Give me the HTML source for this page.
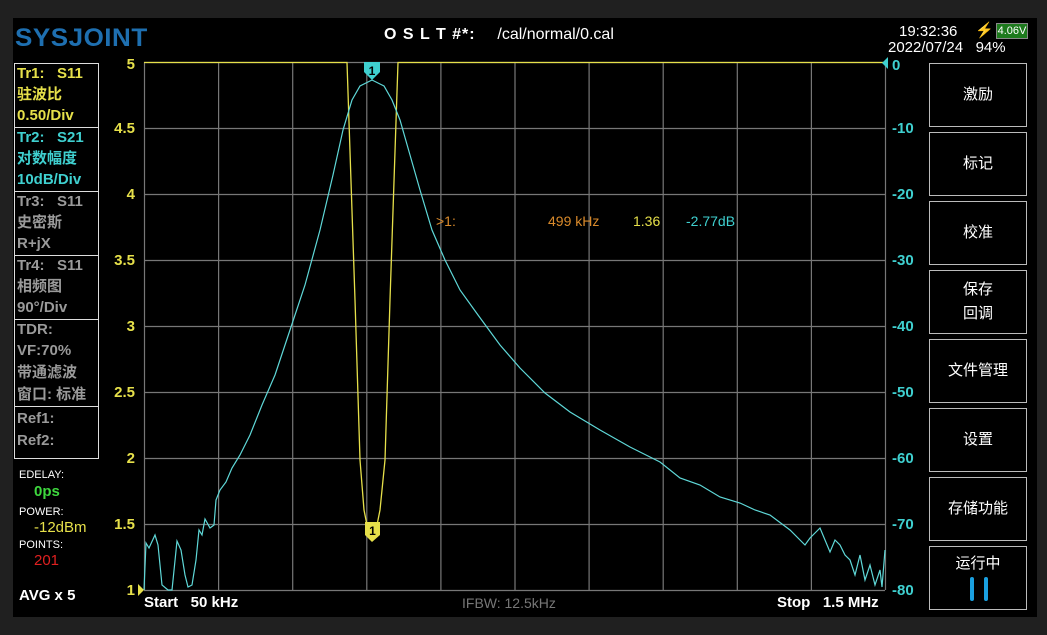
<!DOCTYPE html>
<html><head><meta charset="utf-8"><style>
body{margin:0;width:1047px;height:635px;background:#202020;position:relative;overflow:hidden;font-family:"Liberation Sans","Noto Sans CJK SC",sans-serif;}
#scr{position:absolute;left:13px;top:18px;width:1024px;height:599px;background:#000;}
.a{position:absolute;white-space:nowrap;}
.box{position:absolute;left:14px;width:85px;border:1px solid #ddd;box-sizing:border-box;}
.l{position:absolute;left:17px;font-size:15px;line-height:20px;font-weight:bold;white-space:nowrap;}
.btn{position:absolute;left:929px;width:98px;border:1.5px solid #bbb;box-sizing:border-box;color:#fff;font-size:15px;display:flex;align-items:center;justify-content:center;text-align:center;line-height:24px;}
.y{color:#e6e04a}.c{color:#3fd0d0}.g{color:#9a9a9a}
.yl{position:absolute;right:912px;font-size:15px;color:#e6e04a;font-weight:bold}
.cl{position:absolute;left:892px;font-size:15px;color:#3fd0d0;font-weight:bold}
</style></head><body>
<div id="scr"></div>
<div class="a" style="left:15px;top:24px;font-size:25px;font-weight:bold;color:#1e6fb0;letter-spacing:0.5px;transform:scaleX(1.04);transform-origin:left">SYSJOINT</div>
<div class="a" style="left:384px;top:26px;font-size:16px;color:#fff;font-weight:bold;letter-spacing:1px">O S L T #*: &nbsp;&nbsp; <span style="font-weight:normal;letter-spacing:0">/cal/normal/0.cal</span></div>
<div class="a" style="left:899px;top:23px;font-size:15px;color:#fff">19:32:36</div>
<div class="a" style="left:975px;top:21px;font-size:15px;color:#f0c020">⚡</div>
<div class="a" style="left:996px;top:23px;width:30px;height:14px;background:#1d7a1d;border:1px solid #888;font-size:11px;color:#fff;line-height:14px;text-align:center">4.06V</div>
<div class="a" style="left:888px;top:39px;font-size:15px;color:#fff">2022/07/24 &nbsp;&nbsp;94%</div>

<div class="box" style="top:63px;height:65px"></div>
<div class="box" style="top:127px;height:65px"></div>
<div class="box" style="top:191px;height:65px"></div>
<div class="box" style="top:255px;height:65px"></div>
<div class="box" style="top:319px;height:88px"></div>
<div class="box" style="top:406px;height:53px"></div>
<div class="l y" style="top:64px">Tr1: &nbsp; S11</div>
<div class="l y" style="top:85px">驻波比</div>
<div class="l y" style="top:106px">0.50/Div</div>
<div class="l c" style="top:128px">Tr2: &nbsp; S21</div>
<div class="l c" style="top:149px">对数幅度</div>
<div class="l c" style="top:170px">10dB/Div</div>
<div class="l g" style="top:192px">Tr3: &nbsp; S11</div>
<div class="l g" style="top:213px">史密斯</div>
<div class="l g" style="top:234px">R+jX</div>
<div class="l g" style="top:256px">Tr4: &nbsp; S11</div>
<div class="l g" style="top:277px">相频图</div>
<div class="l g" style="top:298px">90°/Div</div>
<div class="l g" style="top:320px">TDR:</div>
<div class="l g" style="top:341px">VF:70%</div>
<div class="l g" style="top:363px">带通滤波</div>
<div class="l g" style="top:385px">窗口: 标准</div>
<div class="l g" style="top:409px">Ref1:</div>
<div class="l g" style="top:431px">Ref2:</div>
<div class="a" style="left:19px;top:469px;font-size:11px;color:#fff">EDELAY:</div>
<div class="a" style="left:34px;top:483px;font-size:15px;color:#3ed83e;font-weight:bold">0ps</div>
<div class="a" style="left:19px;top:506px;font-size:11px;color:#fff">POWER:</div>
<div class="a" style="left:34px;top:519px;font-size:15px;color:#e6e04a">-12dBm</div>
<div class="a" style="left:19px;top:539px;font-size:11px;color:#fff">POINTS:</div>
<div class="a" style="left:34px;top:552px;font-size:15px;color:#e02020">201</div>
<div class="a" style="left:19px;top:587px;font-size:15px;color:#fff;font-weight:bold">AVG x 5</div>

<div class="yl" style="top:56px">5</div><div class="yl" style="top:120px">4.5</div><div class="yl" style="top:186px">4</div><div class="yl" style="top:252px">3.5</div><div class="yl" style="top:318px">3</div><div class="yl" style="top:384px">2.5</div><div class="yl" style="top:450px">2</div><div class="yl" style="top:516px">1.5</div><div class="yl" style="top:582px">1</div>
<div class="cl" style="top:57px">0</div><div class="cl" style="top:120px">-10</div><div class="cl" style="top:186px">-20</div><div class="cl" style="top:252px">-30</div><div class="cl" style="top:318px">-40</div><div class="cl" style="top:384px">-50</div><div class="cl" style="top:450px">-60</div><div class="cl" style="top:516px">-70</div><div class="cl" style="top:582px">-80</div>

<svg class="a" style="left:0;top:0" width="1047" height="635">
<g stroke="#777" stroke-width="1.2" fill="none">
<path d="M144.5 62V590M218.6 62V590M292.7 62V590M366.8 62V590M440.9 62V590M515 62V590M589.1 62V590M663.2 62V590M737.3 62V590M811.4 62V590M885.5 62V590"/>
<path d="M144 62.5H885M144 128.5H885M144 194.5H885M144 260.5H885M144 326.5H885M144 392.5H885M144 458.5H885M144 524.5H885M144 590.5H885"/>
</g>
<path d="M144 62.5H347L355 300L360 460L364 510L368 530L372 538L376 530L380 510L385 460L390 300L398 62.5H885" stroke="#e6e04a" stroke-width="1.3" fill="none"/>
<polyline fill="none" stroke="#5fd8d8" stroke-width="1.2" points="144,590 146,543 149,548 155,535 158,545 162,585 168,590 172,590 177,541 181,550 185,575 188,587 192,585 196,560 199,530 202,535 205,519 210,528 214,525 216,500 220,490 226,482 232,468 240,455 250,435 262,405 275,375 290,330 305,285 320,230 333,175 343,130 352,100 360,86 372,80 384,86 392,100 400,120 410,155 420,190 432,230 445,260 460,290 478,315 500,345 520,368 545,393 570,412 600,430 630,447 660,462 680,478 700,485 720,497 740,503 755,510 770,515 790,530 800,540 805,545 810,538 820,528 830,552 835,540 840,545 845,555 850,560 855,575 860,555 865,580 870,565 875,585 880,570 882,587 885,550"/>
<path d="M364 62H380V72L372 80L364 72Z" fill="#3fd0d0"/>
<text x="372" y="75" font-size="12" font-weight="bold" text-anchor="middle" fill="#000" font-family="Liberation Sans">1</text>
<path d="M365 522H380V535L372 542L365 535Z" fill="#e6e04a"/>
<text x="372.5" y="535" font-size="12" font-weight="bold" text-anchor="middle" fill="#000" font-family="Liberation Sans">1</text>
<path d="M888 57L888 69L882 63Z" fill="#3fd0d0"/>
<path d="M138 584L138 596L144 590Z" fill="#e6e04a"/>
<path d="M972 579V599M986 579V599" stroke="#1aa0e0" stroke-width="4" stroke-linecap="round"/>
</svg>

<div class="a" style="left:436px;top:213px;font-size:14px;color:#d98a2b">&gt;1:</div>
<div class="a" style="left:548px;top:213px;font-size:14px;color:#d98a2b">499 kHz</div>
<div class="a" style="left:633px;top:213px;font-size:14px;color:#e6e04a">1.36</div>
<div class="a" style="left:686px;top:213px;font-size:14px;color:#3fd0d0">-2.77dB</div>
<div class="a" style="left:144px;top:594px;font-size:15px;color:#fff;font-weight:bold">Start &nbsp; 50 kHz</div>
<div class="a" style="left:462px;top:595px;font-size:14px;color:#777">IFBW: 12.5kHz</div>
<div class="a" style="left:777px;top:594px;font-size:15px;color:#fff;font-weight:bold">Stop &nbsp; 1.5 MHz</div>

<div class="btn" style="top:63px;height:64px">激励</div>
<div class="btn" style="top:132px;height:64px">标记</div>
<div class="btn" style="top:201px;height:64px">校准</div>
<div class="btn" style="top:270px;height:64px">保存<br>回调</div>
<div class="btn" style="top:339px;height:64px">文件管理</div>
<div class="btn" style="top:408px;height:64px">设置</div>
<div class="btn" style="top:477px;height:64px">存储功能</div>
<div class="btn" style="top:546px;height:64px;align-items:flex-start;padding-top:5px">运行中</div>
</body></html>
